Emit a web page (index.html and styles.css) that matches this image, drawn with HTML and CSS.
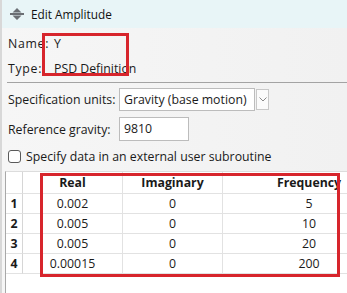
FILE: index.html
```html
<!DOCTYPE html>
<html lang="en">
<head>
  <meta charset="UTF-8" />
  <title>Edit Amplitude</title>
  <link rel="stylesheet" href="styles.css">
</head>
<body>
  <div class="window">
    <div class="titlebar">
      <svg class="app-icon" width="14" height="12" viewBox="0 0 14 12">
        <path d="M7 0 L11.5 4.5 L2.5 4.5 Z M7 12 L11.5 7.5 L2.5 7.5 Z" fill="#6b6f74"/>
        <rect x="0" y="5" width="14" height="2" fill="#6b6f74"/>
      </svg>
      <span class="title">Edit Amplitude</span>
    </div>

    <div class="content">
      <div class="info">
        <div class="info-row"><span class="label">Name:</span><span class="value">Y</span></div>
        <div class="info-row"><span class="label">Type:</span><span class="value">PSD Definition</span></div>
        <div class="mark mark-info"></div>
      </div>

      <div class="separator"></div>

      <div class="field field-units">
        <span class="field-label">Specification units:</span>
        <div class="combo">Gravity (base motion)</div>
        <span class="combo-arrow">
          <svg width="8" height="5" viewBox="0 0 8 5"><path d="M0.5 0.5 L4 4 L7.5 0.5" fill="none" stroke="#8a8a8a" stroke-width="1"/></svg>
        </span>
      </div>

      <div class="field field-gravity">
        <span class="field-label">Reference gravity:</span>
        <div class="text-input">9810</div>
      </div>

      <label class="check-row">
        <span class="checkbox"></span>
        <span>Specify data in an external user subroutine</span>
      </label>

      <div class="table-wrap">
        <div class="grid-row grid-head">
          <div class="cell rowhead"></div>
          <div class="cell">Real</div>
          <div class="cell">Imaginary</div>
          <div class="cell last">Frequency</div>
        </div>
        <div class="grid-row">
          <div class="cell rowhead">1</div><div class="cell">0.002</div><div class="cell">0</div><div class="cell last">5</div>
        </div>
        <div class="grid-row">
          <div class="cell rowhead">2</div><div class="cell">0.005</div><div class="cell">0</div><div class="cell last">10</div>
        </div>
        <div class="grid-row">
          <div class="cell rowhead">3</div><div class="cell">0.005</div><div class="cell">0</div><div class="cell last">20</div>
        </div>
        <div class="grid-row">
          <div class="cell rowhead">4</div><div class="cell">0.00015</div><div class="cell">0</div><div class="cell last">200</div>
        </div>
        <div class="mark mark-table"></div>
      </div>
    </div>
  </div>
</body>
</html>
```

FILE: styles.css
```css
body {
  margin: 0;
  width: 347px;
  height: 293px;
  overflow: hidden;
  font-family: "Open Sans", "Noto Sans", sans-serif;
  font-size: 12.3px;
  color: #1a1a1a;
  background: #f4f4f4;
}
.window {
  height: 293px;
  border-left: 2px solid #d8d8d8;
  background: linear-gradient(to right, #f6f6f6, #f1f1f1);
}
.titlebar {
  height: 28px;
  display: flex;
  align-items: center;
  padding-left: 8px;
  background: #e8f5f7;
}
.app-icon {
  margin-right: 7px;
}
.title {
  font-size: 11.8px;
  color: #111;
}
.content {
  padding-left: 6px;
}
.info {
  position: relative;
  padding-top: 3px;
}
.info-row {
  height: 25px;
  display: flex;
  align-items: center;
}
.label {
  width: 46px;
  letter-spacing: 0.7px;
}
.mark {
  position: absolute;
  box-sizing: border-box;
  border: 3px solid #d7252c;
  pointer-events: none;
}
.mark-info {
  left: 34px;
  top: 5px;
  width: 87px;
  height: 43px;
}
.separator {
  height: 1px;
  background: #a3a3a3;
  margin: 1px 0 5px -1px;
}
.field {
  display: flex;
  align-items: center;
  white-space: nowrap;
}
.field-units {
  height: 23px;
}
.field-gravity {
  height: 24px;
  margin-top: 6px;
}
.field-label {
  width: 111px;
}
.combo {
  box-sizing: border-box;
  width: 136px;
  height: 23px;
  line-height: 21px;
  padding-left: 4px;
  border: 1px solid #bcbcbc;
  background: #fff;
}
.combo-arrow {
  box-sizing: border-box;
  width: 13px;
  height: 21px;
  margin-left: 1px;
  border: 1px solid #c8c8c8;
  background: #fbfbfb;
  display: flex;
  align-items: center;
  justify-content: center;
}
.text-input {
  box-sizing: border-box;
  width: 70px;
  height: 24px;
  line-height: 22px;
  padding-left: 4px;
  border: 1px solid #bcbcbc;
  background: #fff;
}
.check-row {
  display: flex;
  align-items: center;
  height: 16px;
  margin-top: 7px;
  gap: 5px;
  white-space: nowrap;
}
.checkbox {
  width: 11px;
  height: 11px;
  border: 1px solid #5a5a5a;
  border-radius: 3px;
  background: #fff;
}
.table-wrap {
  position: relative;
  margin-top: 7px;
  margin-left: -3px;
  height: 130px;
  overflow: hidden;
  background: #fff;
  border-left: 1px solid #a8a8a8;
  border-top: 1px solid #dcdcdc;
}
.grid-row {
  display: grid;
  grid-template-columns: 17px 100px 100px 172px;
  height: 20px;
}
.grid-head {
  height: 22px;
  font-weight: bold;
}
.cell {
  box-sizing: border-box;
  display: flex;
  align-items: center;
  justify-content: center;
  border-right: 1px solid #e2e2e2;
  border-bottom: 1px solid #e2e2e2;
  white-space: nowrap;
}
.cell.last {
  border-right: none;
}
.rowhead {
  font-weight: bold;
  border-right-color: #d6d6d6;
}
.mark-table {
  left: 34px;
  top: 1px;
  width: 300px;
  height: 104px;
}
```
